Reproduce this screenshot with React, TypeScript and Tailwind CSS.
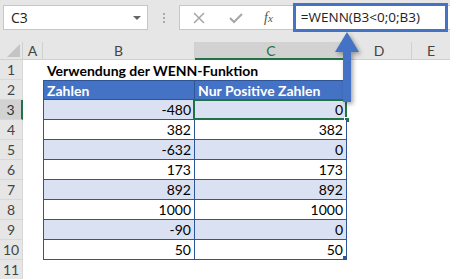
const rows = [
  { n: 3, b: "-480", c: "0" },
  { n: 4, b: "382", c: "382" },
  { n: 5, b: "-632", c: "0" },
  { n: 6, b: "173", c: "173" },
  { n: 7, b: "892", c: "892" },
  { n: 8, b: "1000", c: "1000" },
  { n: 9, b: "-90", c: "0" },
  { n: 10, b: "50", c: "50" },
];

const RowHead = ({ n, active }: { n: number; active?: boolean }) => (
  <div
    className={
      active
        ? "flex h-full w-[23px] shrink-0 items-center justify-center border-r-2 border-b border-r-[#217346] border-b-[#d8d8d8] bg-[#d2d2d2] text-[#333]"
        : "flex h-full w-[23px] shrink-0 items-center justify-center border-r border-b border-[#d8d8d8] bg-[#e6e6e6] text-[#444]"
    }
  >
    {n}
  </div>
);

const App = () => {
  return (
    <div className="relative h-[279px] w-[450px] overflow-hidden bg-white font-['Lato',sans-serif] text-[14px] text-black">
      {/* formula bar */}
      <div className="flex h-[42px] items-start bg-[#e6e6e6] pt-[5px]">
        <div className="ml-[3px] flex h-[25px] w-[145px] items-center justify-between border border-[#c6c6c6] bg-white pr-[6px] pl-[7px] font-['Open_Sans',sans-serif] text-[14px] text-[#222]">
          <span>C3</span>
          <span className="h-0 w-0 border-x-[4px] border-t-[4px] border-x-transparent border-t-[#666]" />
        </div>
        <div className="flex h-[25px] w-[31px] flex-col items-center justify-center gap-[2px]">
          <span className="h-[2px] w-[2px] bg-[#aaa]" />
          <span className="h-[2px] w-[2px] bg-[#aaa]" />
          <span className="h-[2px] w-[2px] bg-[#aaa]" />
        </div>
        <div className="flex h-[25px] flex-1 items-center border border-r-0 border-[#c6c6c6] bg-white">
          <svg width="12" height="12" viewBox="0 0 12 12" className="ml-[13px]">
            <path d="M1 1 L11 11 M11 1 L1 11" stroke="#a6a6a6" strokeWidth="1.5" />
          </svg>
          <svg width="14" height="12" viewBox="0 0 14 12" className="ml-[24px]">
            <path d="M1 6 L5 10 L13 2" stroke="#a6a6a6" strokeWidth="2" fill="none" />
          </svg>
          <span className="ml-[21px] font-['Liberation_Serif',serif] text-[14px] text-[#555] italic">
            f<span className="text-[11px]">x</span>
          </span>
          <span className="ml-[28px] font-['Open_Sans',sans-serif] text-[13.5px] text-[#222]">
            =WENN(B3&lt;0;0;B3)
          </span>
        </div>
      </div>

      {/* column headers */}
      <div className="flex h-[18px] bg-[#e6e6e6] text-[14px] text-[#444]">
        <div className="flex w-[23px] items-end justify-end border-r border-b border-[#d0d0d0] p-[2px]">
          <svg width="13" height="13" viewBox="0 0 13 13">
            <path d="M13 0 L13 13 L0 13 Z" fill="#c4c4c4" />
          </svg>
        </div>
        <div className="flex w-[20px] items-center justify-center border-r border-b border-[#d0d0d0]">A</div>
        <div className="flex w-[152px] items-center justify-center border-r border-b border-[#d0d0d0]">B</div>
        <div className="flex w-[152px] items-center justify-center border-b-2 border-[#217346] bg-[#d2d2d2] text-[#217346]">C</div>
        <div className="flex w-[65px] items-center justify-center border-r border-b border-[#d0d0d0]">D</div>
        <div className="flex flex-1 items-center justify-center border-b border-[#d0d0d0]">E</div>
      </div>

      {/* row 1 */}
      <div className="flex h-[20px]">
        <RowHead n={1} />
        <div className="w-[20px]" />
        <div className="flex items-center pl-[4px] font-bold whitespace-nowrap">
          Verwendung der WENN-Funktion
        </div>
      </div>

      {/* row 2 header */}
      <div className="flex h-[20px]">
        <RowHead n={2} />
        <div className="w-[20px]" />
        <div className="flex w-[152px] items-center border border-[#2f5597] bg-[#4472c4] pl-[3px] font-bold text-white">
          Zahlen
        </div>
        <div className="flex w-[152px] items-center border-y border-r border-[#2f5597] bg-[#4472c4] pl-[3px] font-bold text-white">
          Nur Positive Zahlen
        </div>
      </div>

      {rows.map((r, i) => (
        <div key={r.n} className="flex h-[20px]">
          <RowHead n={r.n} active={r.n === 3} />
          <div className="w-[20px]" />
          <div
            className={
              i % 2 === 0
                ? "flex w-[152px] items-center justify-end border-x border-b border-[#2f5597] bg-[#d9e1f2] pr-[3px]"
                : "flex w-[152px] items-center justify-end border-x border-b border-[#2f5597] bg-white pr-[3px]"
            }
          >
            {r.b}
          </div>
          <div
            className={
              i % 2 === 0
                ? "relative flex w-[152px] items-center justify-end border-r border-b border-[#2f5597] bg-[#d9e1f2] pr-[3px]"
                : "relative flex w-[152px] items-center justify-end border-r border-b border-[#2f5597] bg-white pr-[3px]"
            }
          >
            {r.c}
            {r.n === 3 && (
              <>
                <span className="absolute -top-px -right-px -bottom-px -left-[2px] border-2 border-[#217346]" />
                <span className="absolute -right-[4px] -bottom-[4px] h-[6px] w-[6px] border border-white bg-[#217346]" />
              </>
            )}
            {r.n === 10 && (
              <span className="absolute -right-px -bottom-px h-[4px] w-[4px] bg-[#2f5597]" />
            )}
          </div>
        </div>
      ))}

      <div className="flex h-[20px]">
        <RowHead n={11} />
      </div>

      {/* highlight box + arrow */}
      <div className="absolute top-[3px] left-[293px] h-[29px] w-[155px] border-[3px] border-[#4472c4]" />
      <svg
        className="pointer-events-none absolute top-0 left-0"
        width="450"
        height="279"
        viewBox="0 0 450 279"
        style={{ filter: "drop-shadow(2px 2px 2px rgba(0,0,0,0.35))" }}
      >
        <path d="M347 32 L359 52 L351 52 L351 102 L343 102 L343 52 L335 52 Z" fill="#4472c4" />
      </svg>
    </div>
  );
};

export default App;
